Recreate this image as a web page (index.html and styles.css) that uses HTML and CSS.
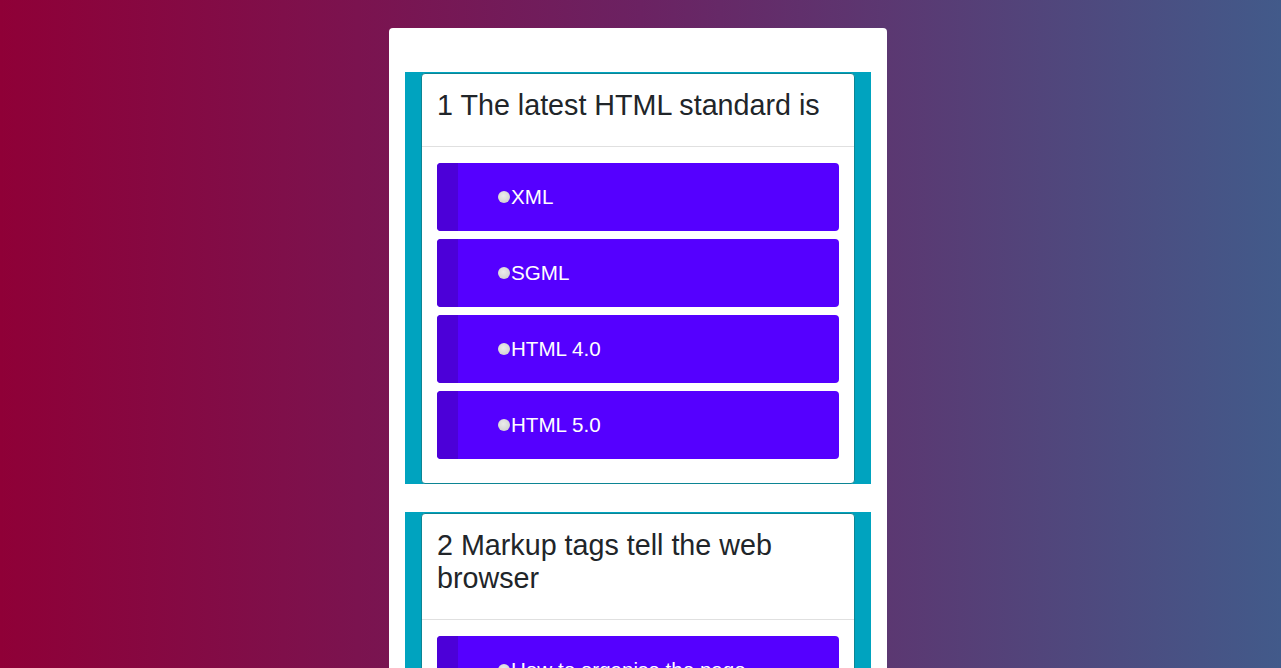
FILE: index.html
```html
<!DOCTYPE html>
<html lang="en">
<head>
<meta charset="utf-8">
<title>HTML Quiz</title>
<link rel="stylesheet" href="styles.css">
</head>
<body>
<main class="quiz">
  <section class="question">
    <div class="card">
      <div class="card-header"><h3 class="title">1 The latest HTML standard is</h3></div>
      <div class="card-body">
        <label class="option"><span class="stripe"></span><span class="dot"></span><span class="label">XML</span></label>
        <label class="option"><span class="stripe"></span><span class="dot"></span><span class="label">SGML</span></label>
        <label class="option"><span class="stripe"></span><span class="dot"></span><span class="label">HTML 4.0</span></label>
        <label class="option"><span class="stripe"></span><span class="dot"></span><span class="label">HTML 5.0</span></label>
      </div>
    </div>
  </section>
  <section class="question">
    <div class="card">
      <div class="card-header"><h3 class="title">2 Markup tags tell the web browser</h3></div>
      <div class="card-body">
        <label class="option"><span class="stripe"></span><span class="dot"></span><span class="label">How to organise the page</span></label>
        <label class="option"><span class="stripe"></span><span class="dot"></span><span class="label">How to display the page</span></label>
        <label class="option"><span class="stripe"></span><span class="dot"></span><span class="label">How to display message box on page</span></label>
        <label class="option"><span class="stripe"></span><span class="dot"></span><span class="label">None of these</span></label>
      </div>
    </div>
  </section>
</main>
</body>
</html>
```

FILE: styles.css
```css
html, body {
  margin: 0;
  padding: 0;
}
body {
  min-height: 100vh;
  background: linear-gradient(to right, #8f0037 0%, #6b2262 50%, #425a8a 100%);
  font-family: "Liberation Sans", Arial, sans-serif;
  color: #212529;
  overflow: hidden;
}
.quiz {
  width: 498px;
  box-sizing: border-box;
  margin: 28px 0 0 calc(50% - 251.5px);
  background: #ffffff;
  border-radius: 4px;
  padding: 44px 16px 16px;
}
.question {
  background: #00a3bf;
  padding: 1px 16px 0;
  margin-bottom: 28px;
}
.card {
  background: #ffffff;
  border: 1px solid #0c8594;
  border-radius: 4px;
}
.card-header {
  padding: 15px 15px 16px;
  border-bottom: 1px solid #e0e0e0;
}
.title {
  margin: 0 0 8px;
  font-size: 28.7px;
  font-weight: 400;
  line-height: 33px;
}
.card-body {
  padding: 16px 15px 16px;
}
.option {
  display: flex;
  align-items: center;
  height: 68px;
  margin-bottom: 8px;
  background: #5500ff;
  border-radius: 4px;
  overflow: hidden;
  color: #ffffff;
  font-size: 20.6px;
}
.stripe {
  align-self: stretch;
  width: 21px;
  background: #4c00d8;
  flex: none;
}
.dot {
  flex: none;
  width: 12px;
  height: 12px;
  border-radius: 50%;
  margin-left: 40px;
  margin-right: 1px;
  background: radial-gradient(circle at 45% 40%, #ececec 0%, #d8d8d8 60%, #c4c4c4 100%);
}
.label {
  white-space: nowrap;
}
```
